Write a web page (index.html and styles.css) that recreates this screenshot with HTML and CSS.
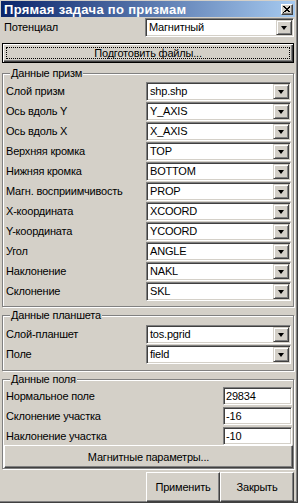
FILE: index.html
```html
<!DOCTYPE html>
<html lang="ru">
<head>
    <meta charset="UTF-8">
    <title>Прямая задача по призмам</title>
    <link rel="stylesheet" href="styles.css">
</head>
<body>
    <div class="window">
        <div class="caption">
            <span class="caption-title">Прямая задача по призмам</span>
            <span class="caption-close">
                <svg width="8" height="7" viewBox="0 0 8 7"><path d="M0.5 0.5 L7.5 6.5 M1.5 0.5 L6.5 6.5 M7.5 0.5 L0.5 6.5 M6.5 0.5 L1.5 6.5" stroke="#000" stroke-width="1" fill="none" shape-rendering="crispEdges"/></svg>
            </span>
        </div>
        <div class="client">
            <div class="row row-potential">
                <span class="label">Потенциал</span>
                <div class="combo combo-wide"><span class="combo-text">Магнитный</span><span class="combo-btn"><i class="arrow"></i></span></div>
            </div>
            <div class="btn btn-default"><span class="focus">Подготовить файлы...</span></div>

            <fieldset class="group group-prisms">
                <legend>Данные призм</legend>
                <div class="row"><span class="label">Слой призм</span><div class="combo"><span class="combo-text">shp.shp</span><span class="combo-btn"><i class="arrow"></i></span></div></div>
                <div class="row"><span class="label">Ось вдоль Y</span><div class="combo"><span class="combo-text">Y_AXIS</span><span class="combo-btn"><i class="arrow"></i></span></div></div>
                <div class="row"><span class="label">Ось вдоль X</span><div class="combo"><span class="combo-text">X_AXIS</span><span class="combo-btn"><i class="arrow"></i></span></div></div>
                <div class="row"><span class="label">Верхняя кромка</span><div class="combo"><span class="combo-text">TOP</span><span class="combo-btn"><i class="arrow"></i></span></div></div>
                <div class="row"><span class="label">Нижняя кромка</span><div class="combo"><span class="combo-text">BOTTOM</span><span class="combo-btn"><i class="arrow"></i></span></div></div>
                <div class="row"><span class="label">Магн. восприимчивость</span><div class="combo"><span class="combo-text">PROP</span><span class="combo-btn"><i class="arrow"></i></span></div></div>
                <div class="row"><span class="label">X-координата</span><div class="combo"><span class="combo-text">XCOORD</span><span class="combo-btn"><i class="arrow"></i></span></div></div>
                <div class="row"><span class="label">Y-координата</span><div class="combo"><span class="combo-text">YCOORD</span><span class="combo-btn"><i class="arrow"></i></span></div></div>
                <div class="row"><span class="label">Угол</span><div class="combo"><span class="combo-text">ANGLE</span><span class="combo-btn"><i class="arrow"></i></span></div></div>
                <div class="row"><span class="label">Наклонение</span><div class="combo"><span class="combo-text">NAKL</span><span class="combo-btn"><i class="arrow"></i></span></div></div>
                <div class="row"><span class="label">Склонение</span><div class="combo"><span class="combo-text">SKL</span><span class="combo-btn"><i class="arrow"></i></span></div></div>
            </fieldset>

            <fieldset class="group group-grid">
                <legend>Данные планшета</legend>
                <div class="row"><span class="label">Слой-планшет</span><div class="combo"><span class="combo-text">tos.pgrid</span><span class="combo-btn"><i class="arrow"></i></span></div></div>
                <div class="row"><span class="label">Поле</span><div class="combo"><span class="combo-text">field</span><span class="combo-btn"><i class="arrow"></i></span></div></div>
            </fieldset>

            <fieldset class="group group-field">
                <legend>Данные поля</legend>
                <div class="row"><span class="label">Нормальное поле</span><div class="edit">29834</div></div>
                <div class="row"><span class="label">Склонение участка</span><div class="edit">-16</div></div>
                <div class="row"><span class="label">Наклонение участка</span><div class="edit">-10</div></div>
                <div class="btn btn-magnetic">Магнитные параметры...</div>
            </fieldset>

            <div class="footer">
                <div class="btn btn-footer">Применить</div>
                <div class="btn btn-footer">Закрыть</div>
            </div>
        </div>
    </div>
</body>
</html>
```

FILE: styles.css
```css
body {
    margin: 0;
    padding: 0;
    background-color: #d4d0c8;
    font-family: "Liberation Sans", Arial, sans-serif;
    font-size: 11px;
    letter-spacing: -0.2px;
    color: #000;
}
.window {
    width: 298px;
    height: 503px;
    box-sizing: border-box;
    padding: 1px 4px 1px 2px;
    background-color: #d4d0c8;
    box-shadow: inset -1px -1px #404040, inset -2px -2px #808080;
    display: flex;
    flex-direction: column;
    overflow: hidden;
}
.caption {
    height: 16px;
    margin: 0 -1px 0 -1px;
    padding: 0 2px 0 3px;
    background: linear-gradient(to right, #0a246a, #a6caf0);
    display: flex;
    align-items: center;
    justify-content: space-between;
    flex-shrink: 0;
}
.caption-title {
    color: #fff;
    font-weight: bold;
    font-size: 13px;
    letter-spacing: 0.3px;
}
.caption-close {
    width: 12px;
    height: 11px;
    box-sizing: border-box;
    background-color: #d4d0c8;
    border: 1px solid;
    border-color: #fff #404040 #404040 #fff;
    box-shadow: inset -1px -1px #808080;
    display: flex;
    align-items: center;
    justify-content: center;
}
.caption-close svg {
    display: block;
}
.client {
    display: flex;
    flex-direction: column;
    flex: 1;
}
.row {
    height: 20px;
    display: flex;
    align-items: flex-start;
    justify-content: space-between;
}
.row-potential {
    margin-top: 1px;
    height: 19px;
}
.label {
    line-height: 19px;
    padding-left: 2px;
    white-space: nowrap;
}
.combo {
    width: 145px;
    height: 19px;
    box-sizing: border-box;
    background-color: #fff;
    border: 1px solid;
    border-color: #808080 #fff #fff #808080;
    box-shadow: inset 1px 1px #404040, inset -1px -1px #d4d0c8;
    padding: 1px;
    display: flex;
    align-items: stretch;
}
.combo-wide {
    width: 149px;
}
.combo-text {
    flex: 1;
    line-height: 15px;
    padding-left: 2px;
    white-space: nowrap;
    overflow: hidden;
}
.combo-btn {
    width: 16px;
    box-sizing: border-box;
    background-color: #d4d0c8;
    border: 1px solid;
    border-color: #d4d0c8 #404040 #404040 #d4d0c8;
    box-shadow: inset 1px 1px #fff, inset -1px -1px #808080;
    display: flex;
    align-items: center;
    justify-content: center;
}
.arrow {
    width: 0;
    height: 0;
    border-left: 3.5px solid transparent;
    border-right: 3.5px solid transparent;
    border-top: 4px solid #000;
}
.edit {
    width: 69px;
    height: 18px;
    box-sizing: border-box;
    background-color: #fff;
    border: 1px solid;
    border-color: #808080 #fff #fff #808080;
    box-shadow: inset 1px 1px #404040, inset -1px -1px #d4d0c8;
    padding: 0 2px;
    line-height: 16px;
}
.btn {
    box-sizing: border-box;
    background-color: #d4d0c8;
    border: 1px solid;
    border-color: #fff #404040 #404040 #fff;
    box-shadow: inset -1px -1px #808080;
    display: flex;
    align-items: center;
    justify-content: center;
    white-space: nowrap;
}
.btn-default {
    margin-top: 6px;
    height: 20px;
    border-color: #000;
    box-shadow: inset 1px 1px #fff, inset -1px -1px #404040, inset -2px -2px #808080;
    padding: 3px;
}
.focus {
    flex: 1;
    align-self: stretch;
    text-align: center;
    line-height: 12px;
    outline: 1px dotted #000;
    outline-offset: -1px;
}
.group {
    margin: 4px 0 0 0;
    padding: 2px 2px 2px 1px;
    border: 1px solid #808080;
    box-shadow: inset 1px 1px #fff, 1px 1px #fff;
    min-width: 0;
}
.group legend {
    padding: 0 1px;
    margin-left: 6px;
    line-height: 13px;
    background-color: #d4d0c8;
}
.group-prisms {
    padding-bottom: 4px;
}
.group-grid {
    margin-top: 2px;
    padding-top: 3px;
    padding-bottom: 5px;
}
.group-field {
    margin-top: 2px;
    padding-top: 1px;
    padding-bottom: 0;
    padding-right: 0;
}
.group-field .row {
    margin-right: 1px;
}
.btn-magnetic {
    height: 23px;
    margin-top: -2px;
}
.footer {
    display: flex;
    justify-content: flex-end;
    margin-top: auto;
}
.btn-footer {
    width: 74px;
    height: 30px;
}
```
